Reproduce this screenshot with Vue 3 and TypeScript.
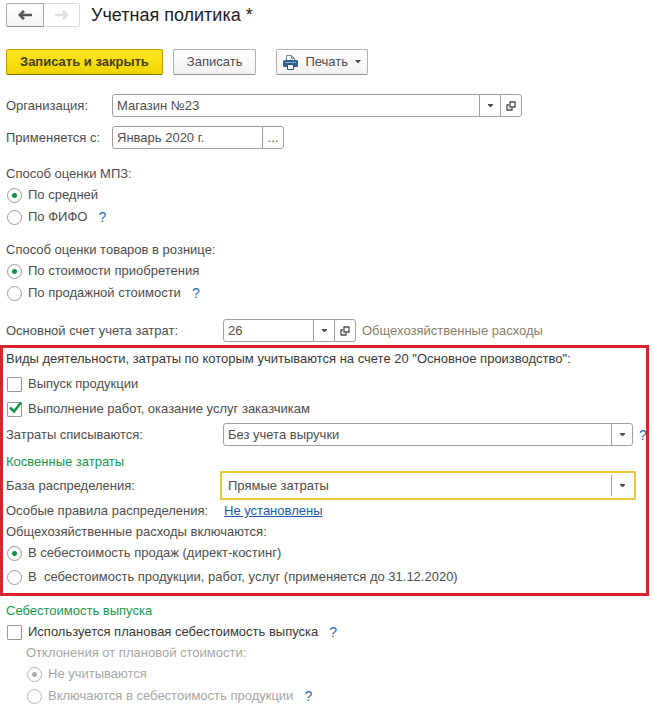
<script setup lang="ts">
import { ref } from 'vue'

const organization = ref('Магазин №23')
const appliedFrom = ref('Январь 2020 г.')
const stockMethod = ref('average')
const retailMethod = ref('cost')
const account = ref('26')
const makesProducts = ref(false)
const doesWorks = ref(true)
const writeOff = ref('Без учета выручки')
const base = ref('Прямые затраты')
const overheads = ref('sales')
const plannedCost = ref(false)
const deviations = ref('ignored')
</script>

<template>
  <main class="page">
    <header class="header">
      <div class="history">
        <button type="button" class="nav" aria-label="Назад">
          <svg width="14" height="10" viewBox="0 0 14 10"><path d="M6 .8 1.800 5 6 9.200M2 5h12" fill="none" stroke="currentColor" stroke-width="2.600" /></svg>
        </button>
        <button type="button" class="nav" aria-label="Вперед" disabled>
          <svg width="14" height="10" viewBox="0 0 14 10"><path d="M8 .8 12.200 5 8 9.200M12 5H0" fill="none" stroke="currentColor" stroke-width="2.600" /></svg>
        </button>
      </div>
      <h1 class="title">Учетная политика *</h1>
    </header>

    <div class="toolbar">
      <button type="button" class="btn primary">Записать и закрыть</button>
      <button type="button" class="btn">Записать</button>
      <button type="button" class="btn print">
        <svg width="15" height="15" viewBox="0 0 15 15">
          <path d="M3.500 5.500v-5h5l3 3v2" fill="#fff" stroke="#6d8296" />
          <path d="M8.500.5v3h3" fill="none" stroke="#6d8296" />
          <rect x="0" y="5" width="15" height="7" rx="1.500" fill="#2f5f8a" />
          <path d="M2 7.500h11" stroke="#86a9c8" />
          <path d="M4.500 9.500h6v5h-6z" fill="#fff" stroke="#2b5277" />
        </svg>
        <span>Печать</span>
        <svg class="caret" width="6" height="4" viewBox="0 0 6 4"><path d="M0 0h6L3 3.500z" fill="currentColor" /></svg>
      </button>
    </div>

    <div class="row org-row">
      <label class="label short" for="org">Организация:</label>
      <div class="field wide">
        <input id="org" v-model="organization" type="text" />
        <button type="button" class="cell" aria-label="Выбрать организацию">
          <svg width="5" height="3" viewBox="0 0 5 3"><path d="M0 0h5v1L3 3H2L0 1z" fill="currentColor" /></svg>
        </button>
        <button type="button" class="cell" aria-label="Открыть организацию">
          <svg width="10" height="10" viewBox="0 0 10 10"><path d="M4 1h5v5H4zM3 4H1v5h5V7" fill="none" stroke="currentColor" stroke-width="1.300" /></svg>
        </button>
      </div>
    </div>
    <div class="row date-row">
      <label class="label short" for="date">Применяется с:</label>
      <div class="field date">
        <input id="date" v-model="appliedFrom" type="text" />
        <button type="button" class="cell" aria-label="Выбрать период">...</button>
      </div>
    </div>

    <div class="group stock" role="radiogroup" aria-labelledby="stock-label">
      <div id="stock-label" class="line">Способ оценки МПЗ:</div>
      <div class="option">
        <label><input v-model="stockMethod" type="radio" name="stock" value="average" />По средней</label>
      </div>
      <div class="option">
        <label><input v-model="stockMethod" type="radio" name="stock" value="fifo" />По ФИФО</label>
        <a class="help" href="#">?</a>
      </div>
    </div>

    <div class="group retail" role="radiogroup" aria-labelledby="retail-label">
      <div id="retail-label" class="line">Способ оценки товаров в рознице:</div>
      <div class="option">
        <label><input v-model="retailMethod" type="radio" name="retail" value="cost" />По стоимости приобретения</label>
      </div>
      <div class="option">
        <label><input v-model="retailMethod" type="radio" name="retail" value="price" />По продажной стоимости</label>
        <a class="help" href="#">?</a>
      </div>
    </div>

    <div class="row account-row">
      <label class="label" for="account">Основной счет учета затрат:</label>
      <div class="field account">
        <input id="account" v-model="account" type="text" />
        <button type="button" class="cell" aria-label="Выбрать счет">
          <svg width="5" height="3" viewBox="0 0 5 3"><path d="M0 0h5v1L3 3H2L0 1z" fill="currentColor" /></svg>
        </button>
        <button type="button" class="cell" aria-label="Открыть счет">
          <svg width="10" height="10" viewBox="0 0 10 10"><path d="M4 1h5v5H4zM3 4H1v5h5V7" fill="none" stroke="currentColor" stroke-width="1.300" /></svg>
        </button>
      </div>
      <span class="note">Общехозяйственные расходы</span>
    </div>

    <section class="marked">
      <div class="line dark">Виды деятельности, затраты по которым учитываются на счете 20 "Основное производство":</div>
      <div class="checks">
        <div class="option">
          <label><input v-model="makesProducts" type="checkbox" />Выпуск продукции</label>
        </div>
        <div class="option">
          <label>
            <span class="tick-box">
              <input v-model="doesWorks" type="checkbox" />
              <svg v-if="doesWorks" class="tick" width="15" height="14" viewBox="0 0 15 14"><path d="m2 6.500 4 4L13 1.500" fill="none" stroke="currentColor" stroke-width="2.600" /></svg>
            </span>Выполнение работ, оказание услуг заказчикам
          </label>
        </div>
      </div>
      <div class="row">
        <label class="label" for="writeoff">Затраты списываются:</label>
        <div class="field grow">
          <select id="writeoff" v-model="writeOff">
            <option>Без учета выручки</option>
            <option>С учетом выручки</option>
          </select>
          <span class="cell">
            <svg width="5" height="3" viewBox="0 0 5 3"><path d="M0 0h5v1L3 3H2L0 1z" fill="currentColor" /></svg>
          </span>
        </div>
        <a class="help edge" href="#">?</a>
      </div>
      <h2 class="heading indirect">Косвенные затраты</h2>
      <div class="row">
        <label class="label" for="base">База распределения:</label>
        <div class="field grow active">
          <select id="base" v-model="base">
            <option>Прямые затраты</option>
            <option>Оплата труда</option>
          </select>
          <span class="cell">
            <svg width="5" height="3" viewBox="0 0 5 3"><path d="M0 0h5v1L3 3H2L0 1z" fill="currentColor" /></svg>
          </span>
        </div>
      </div>
      <div class="line rules">
        <span class="label">Особые правила распределения:</span>
        <a class="link" href="#">Не установлены</a>
      </div>
      <div class="overheads" role="radiogroup" aria-labelledby="overheads-label">
        <div id="overheads-label" class="line">Общехозяйственные расходы включаются:</div>
        <div class="loose">
          <div class="option">
            <label><input v-model="overheads" type="radio" name="overheads" value="sales" />В себестоимость продаж (директ-костинг)</label>
          </div>
          <div class="option">
            <label><input v-model="overheads" type="radio" name="overheads" value="output" />В&nbsp; себестоимость продукции, работ, услуг (применяется до 31.12.2020)</label>
          </div>
        </div>
      </div>
    </section>

    <section class="output">
      <h2 class="heading">Себестоимость выпуска</h2>
      <div class="option">
        <label class="dark"><input v-model="plannedCost" type="checkbox" />Используется плановая себестоимость выпуска</label>
        <a class="help" href="#">?</a>
      </div>
      <div class="nested" role="radiogroup" aria-labelledby="deviation-label">
        <div id="deviation-label" class="line">Отклонения от плановой стоимости:</div>
        <div class="option">
          <label><input v-model="deviations" type="radio" name="deviations" value="ignored" disabled />Не учитываются</label>
        </div>
        <div class="option">
          <label><input v-model="deviations" type="radio" name="deviations" value="included" disabled />Включаются в себестоимость продукции</label>
          <a class="help" href="#">?</a>
        </div>
      </div>
    </section>
  </main>
</template>

<style>
body {
  margin: 0;
  background: #fff;
}
</style>

<style scoped>
* {
  box-sizing: border-box;
}
.page {
  padding: 3px 4px 4px 6px;
  font: 13px/20px "Liberation Sans", Arial, sans-serif;
  color: #4d4d4d;
}
button,
input,
select {
  margin: 0;
  font: inherit;
  color: inherit;
}
button {
  display: flex;
  align-items: center;
  justify-content: center;
  padding: 0;
}
svg {
  flex: none;
}
.header {
  display: flex;
  align-items: center;
  gap: 11px;
}
.history {
  display: flex;
}
.nav {
  width: 38px;
  height: 24px;
  border: 1px solid #a9a9a9;
  border-bottom-color: #8c8c8c;
  border-radius: 2px 0 0 2px;
  background: linear-gradient(#fff, #f4f4f4);
  color: #555;
}
.nav:disabled {
  width: 36px;
  border-color: #dcdcdc;
  border-left: 0;
  border-radius: 0 2px 2px 0;
  background: #fff;
  color: #ddd;
}
.title {
  margin: 0;
  font-size: 18px;
  font-weight: 400;
  line-height: 24px;
  color: #1c1c1c;
}
.toolbar {
  display: flex;
  margin-top: 22px;
}
.btn {
  height: 26px;
  padding: 0 13px;
  border: 1px solid #b0b0b0;
  border-bottom-color: #8f8f8f;
  border-radius: 2px;
  background: linear-gradient(#fff, #f1f1f1);
}
.btn.primary {
  margin-right: 10px;
  border-color: #b39b00;
  border-bottom-color: #857300;
  background: linear-gradient(#ffe720, #f0d400);
  font-weight: 700;
  color: #433e18;
}
.btn.print {
  gap: 7px;
  margin-left: 20px;
  padding: 0 6px;
}
.row {
  display: flex;
  align-items: center;
  height: 23px;
}
.org-row {
  margin-top: 19px;
}
.date-row {
  margin-top: 9px;
}
.label {
  flex: none;
  width: 217px;
}
.label.short {
  width: 106px;
}
.field {
  display: flex;
  height: 23px;
  border: 1px solid #a0a0a0;
  border-radius: 3px;
  background: #fff;
}
.field input,
.field select {
  flex: 1;
  min-width: 0;
  padding: 0 4px;
  border: 0;
  outline: 0;
  background: transparent;
  appearance: none;
}
.field.wide {
  flex: 1;
  max-width: 410px;
}
.field.date {
  width: 172px;
}
.field.account {
  width: 133px;
}
.field.grow {
  flex: 1;
}
.cell {
  display: flex;
  flex: none;
  align-items: center;
  justify-content: center;
  width: 21px;
  border: 0;
  border-left: 1px solid #a0a0a0;
  background: transparent;
}
.field.active {
  height: 29px;
  margin: 0 10px 0 -3px;
  padding: 2px;
  border: 2px solid #edc93a;
  border-radius: 0;
}
.group.stock {
  margin-top: 15px;
}
.group.retail {
  margin-top: 12px;
}
.account-row {
  margin-top: 15px;
}
.line {
  min-height: 20px;
}
.dark {
  color: #383838;
}
.option {
  display: flex;
  align-items: center;
  gap: 11px;
  height: 22px;
}
.option label {
  display: flex;
  align-items: center;
  gap: 6px;
}
input[type="radio"],
input[type="checkbox"] {
  flex: none;
  width: 15px;
  height: 15px;
  margin: 0 0 0 1px;
  border: 1px solid #999;
  background: #fff;
  appearance: none;
}
input[type="checkbox"] {
  border-radius: 1px;
}
input[type="radio"] {
  border-radius: 50%;
}
input[type="radio"]:checked {
  background: radial-gradient(circle, #129447 2px, #fff 3px);
}
input[type="radio"]:disabled {
  border-color: #b5b5b5;
}
input[type="radio"]:disabled:checked {
  background: radial-gradient(circle, #aaa 2px, #fff 3px);
}
.tick-box {
  position: relative;
  display: flex;
}
.tick {
  position: absolute;
  top: -1px;
  left: 2px;
  color: #129447;
  pointer-events: none;
}
.help {
  color: #1874bb;
  font-size: 14px;
  font-weight: 400;
  text-decoration: none;
}
.help.edge {
  flex: none;
  width: 7px;
  margin-left: 6px;
}
.note {
  margin-left: 6px;
  color: #85806a;
}
.marked {
  margin: 3px 0 0 -6px;
  padding: 1px 0 5px 3px;
  border: 3px solid #d9232e;
}
.checks {
  display: grid;
  gap: 3px;
  margin: 4px 0 3px;
}
.heading {
  margin: 0;
  font-size: 13px;
  font-weight: 400;
  line-height: 20px;
  color: #159a4c;
}
.indirect {
  margin: 6px 0 2px;
}
.rules {
  display: flex;
  gap: 1px;
  margin-top: 4px;
}
.link {
  color: #2159ad;
  text-decoration: underline;
}
.overheads {
  margin-top: 1px;
}
.loose {
  display: grid;
  gap: 2px;
}
.output {
  margin-top: 5px;
}
.nested {
  padding-left: 20px;
  color: #a6a6a6;
}
</style>
